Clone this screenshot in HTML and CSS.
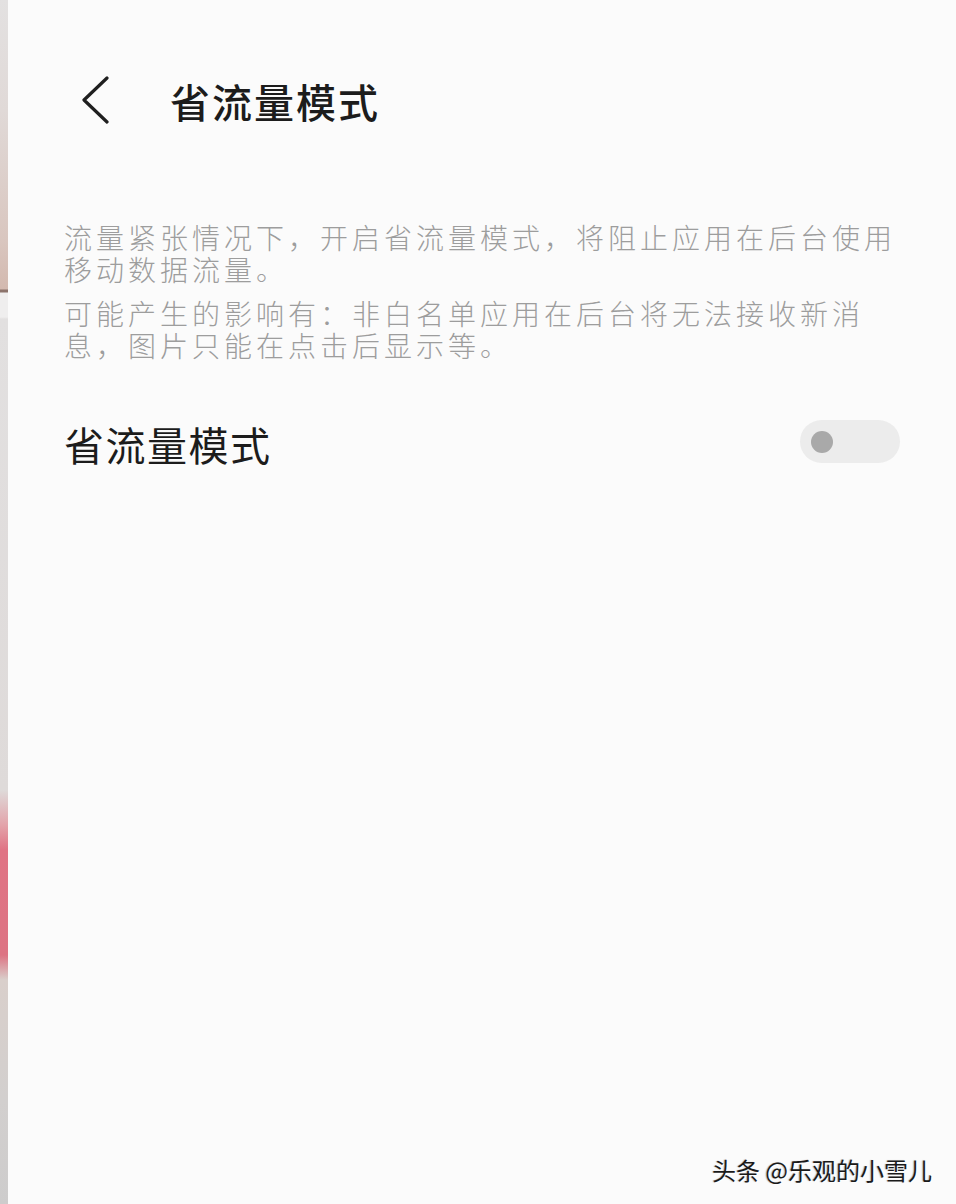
FILE: index.html
```html
<!DOCTYPE html>
<html lang="zh-CN">
<head>
<meta charset="utf-8">
<title>省流量模式</title>
<link rel="stylesheet" href="styles.css">
</head>
<body>
<div class="page">
  <div class="edge"></div>
  <main class="screen">
    <header class="header">
      <svg class="back" width="30" height="48" viewBox="0 0 30 48" aria-hidden="true">
        <polyline points="27,2 4,24 27,46" fill="none" stroke="#1f1f1f" stroke-width="3.2" stroke-linecap="round" stroke-linejoin="round"/>
      </svg>
      <h1 class="title">省流量模式</h1>
    </header>

    <section class="desc">
      <p>流量紧张情况下，开启省流量模式，将阻止应用在后台使用移动数据流量。</p>
      <p>可能产生的影响有：非白名单应用在后台将无法接收新消息，图片只能在点击后显示等。</p>
    </section>

    <div class="row">
      <span class="row-label">省流量模式</span>
      <span class="switch"><span class="knob"></span></span>
    </div>

    <div class="mark">头条 @乐观的小雪儿</div>
  </main>
</div>
</body>
</html>
```

FILE: styles.css
```css
html, body {
  margin: 0;
  padding: 0;
}

body {
  background: #fbfbfb;
  font-family: "Noto Sans CJK SC", "Noto Sans", sans-serif;
  color: #1f1f1f;
}

.page {
  display: flex;
  width: 956px;
  height: 1204px;
  overflow: hidden;
}

/* sliver of the neighbouring window along the left edge */
.edge {
  width: 8px;
  flex: none;
  background: linear-gradient(to bottom,
    #e3e1e1 0px,
    #e0d9d7 110px,
    #d9c6bf 240px,
    #d3b9af 289px,
    #8c736b 290px,
    #8c736b 292px,
    #efeeee 293px,
    #efeeee 317px,
    #e2e0e0 319px,
    #dedad9 790px,
    #e3a3aa 825px,
    #e07384 850px,
    #dd7383 955px,
    #d9cfcb 980px,
    #d2cfce 1100px,
    #cdcccc 1204px);
}

.screen {
  position: relative;
  flex: 1;
  background: #fbfbfb;
}

.header {
  display: flex;
  align-items: center;
  height: 100px;
  margin-top: 51px;
  padding-left: 72px;
  gap: 60px;
}

.back {
  display: block;
  flex: none;
  margin-top: -2px;
}

.title {
  margin: 0;
  font-size: 40px;
  line-height: 1;
  font-weight: 500;
  letter-spacing: 2px;
  color: #1c1c1c;
}

.desc {
  margin-top: 70px;
  padding: 0 56px;
  width: 836px;
  font-size: 28px;
  letter-spacing: 4px;
  line-height: 32px;
  font-weight: 300;
  color: #9d9d9d;
}

.desc p {
  margin: 0;
}

.desc p + p {
  margin-top: 12px;
}

.row {
  display: flex;
  align-items: center;
  justify-content: space-between;
  height: 60px;
  margin-top: 52px;
  padding: 0 56px;
}

.row-label {
  font-size: 40px;
  line-height: 1;
  letter-spacing: 1.5px;
  color: #1c1c1c;
  margin-top: 2px;
}

.switch {
  display: flex;
  align-items: center;
  width: 100px;
  height: 43px;
  padding-left: 11px;
  box-sizing: border-box;
  border-radius: 22px;
  background: #ececec;
  margin-top: -3px;
}

.knob {
  width: 22px;
  height: 22px;
  border-radius: 50%;
  background: #a9a9a9;
}

.mark {
  position: absolute;
  right: 24px;
  bottom: 22px;
  font-size: 24px;
  line-height: 1;
  color: #1a1a1a;
  text-shadow: 1px 1px 1px rgba(255, 255, 255, 0.95), -1px 0 1px rgba(0, 0, 0, 0.25);
}
```
